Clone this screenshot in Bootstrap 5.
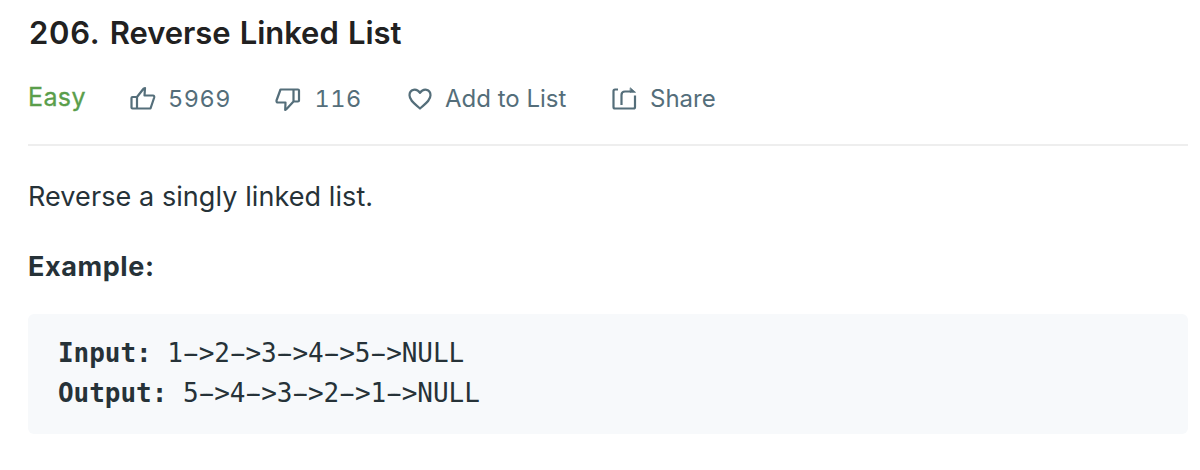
<!DOCTYPE html>
<html lang="en">
<head>
<meta charset="utf-8">
<title>206. Reverse Linked List</title>
<link href="https://cdn.jsdelivr.net/npm/bootstrap@5.3.0/dist/css/bootstrap.min.css" rel="stylesheet">
<style>
  body { font-family: Inter, "Liberation Sans", sans-serif; color: #263238; background: #fff; }
  .problem { padding: 13px 12px 0 28px; }
  .problem-title { font-size: 31px; line-height: 40px; font-weight: 600; color: #212121; letter-spacing: -.06px; word-spacing: 1.5px; padding-left: 1px; }
  .problem-number { letter-spacing: .75px; }
  .problem-meta { height: 93px; padding-top: 24px; border-bottom: 2px solid #eee; font-size: 24px; line-height: 44px; color: #546e7a; }
  .meta-item { height: 44px; }
  .meta-item svg { width: 28px; height: 28px; margin: -1px 11px 0 0; flex: none; fill: none; stroke: currentColor; stroke-width: 2.2; stroke-linejoin: round; stroke-linecap: round; }
  .vote-count { font-variant-numeric: tabular-nums; font-size: 23.5px; letter-spacing: .5px; }
  .difficulty { color: #5a9e4b; width: 101px; font-size: 25px; line-height: 40px; letter-spacing: .4px; -webkit-text-stroke: .3px; }
  .statement { font-size: 27px; line-height: 42px; letter-spacing: .08px; }
  .statement.fw-bold { letter-spacing: .6px; }
  .example-block { font-family: "DejaVu Sans Mono", monospace; font-size: 26px; line-height: 40px; letter-spacing: -.03px; color: #263238; background: #f7f9fb; border-radius: 6px; padding: 19px 30px 21px; height: 120px; }
  .dash { text-shadow: -3px 0 currentColor, 3px 0 currentColor; }
</style>
</head>
<body>
<main class="problem">
  <h1 class="problem-title mb-0"><span class="problem-number">206.</span> Reverse Linked List</h1>
  <div class="problem-meta d-flex">
    <div class="difficulty">Easy</div>
    <div class="meta-item d-flex align-items-center" style="width:145px">
      <svg viewBox="0 0 28 28"><path d="M8 12H3.500Q2.500 12 2.500 13V22.500Q2.500 23.500 3.500 23.500H21.500L25.200 12.500Q25.500 10.500 24 10.500H15.500L16 3Q14.300 3.200 13.500 5L8 12V23.500"/></svg><span class="vote-count">5969</span>
    </div>
    <div class="meta-item d-flex align-items-center" style="width:132px">
      <svg viewBox="0 0 28 28"><path d="M19.500 4.500H6.500L2.500 15.500Q2.300 17.500 4 17.500H11.500L11.200 25Q12.500 24.500 13.500 23L19.500 16.500H24Q25 16.500 25 15.500V5.500Q25 4.500 24 4.500H19.500V16.500"/></svg><span class="vote-count" style="padding-left:1.5px">116</span>
    </div>
    <div class="meta-item d-flex align-items-center" style="width:204px">
      <svg viewBox="0 0 28 28"><path d="M14 23.500C9 19 3.500 15.500 3.500 10.300C3.500 4 10.500 2.800 14 7.800C17.500 2.800 24.500 4 24.500 10.300C24.500 15.500 19 19 14 23.500Z"/></svg><span>Add to List</span>
    </div>
    <div class="meta-item d-flex align-items-center">
      <svg viewBox="0 0 28 28"><path stroke-linecap="butt" d="M8 4.500H5Q3.500 4.500 3.500 6V22Q3.500 23.500 5 23.500H23.500Q25 23.500 25 22V10.500M11.500 20V10Q11.500 6.500 15 6.500H21"/><path d="M20.500 3L25.500 7.300H20.500Z" fill="currentColor" stroke-width=".8"/></svg><span style="padding-left:1px">Share</span>
    </div>
  </div>
  <p class="statement mb-0" style="margin-top:30px">Reverse a singly linked list.</p>
  <p class="statement fw-bold mb-0" style="margin-top:28px">Example:</p>
  <pre class="example-block mb-0" style="margin-top:26px"><strong>Input:</strong> 1<span class="dash">-</span>&gt;2<span class="dash">-</span>&gt;3<span class="dash">-</span>&gt;4<span class="dash">-</span>&gt;5<span class="dash">-</span>&gt;NULL
<strong>Output:</strong> 5<span class="dash">-</span>&gt;4<span class="dash">-</span>&gt;3<span class="dash">-</span>&gt;2<span class="dash">-</span>&gt;1<span class="dash">-</span>&gt;NULL</pre>
</main>
<script src="https://cdn.jsdelivr.net/npm/bootstrap@5.3.0/dist/js/bootstrap.bundle.min.js"></script>
</body>
</html>
